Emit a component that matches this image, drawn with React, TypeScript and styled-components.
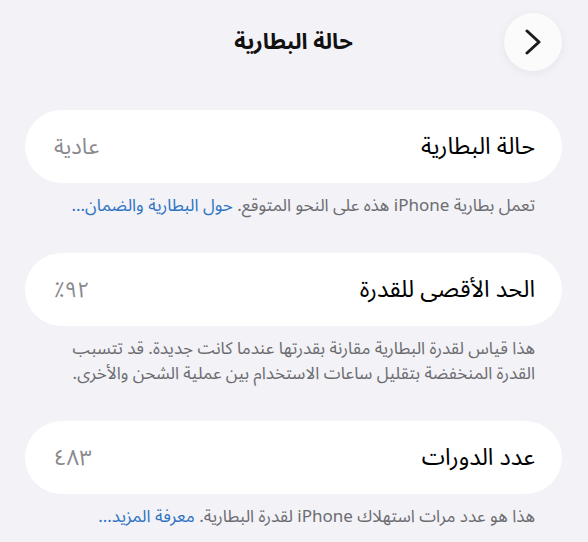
import React from 'react';
import styled, { createGlobalStyle } from 'styled-components';

const GlobalStyle = createGlobalStyle`
  html, body {
    margin: 0;
    padding: 0;
    background: #f2f2f7;
  }
  body {
    font-family: "Noto Sans Arabic", "DejaVu Sans", "Noto Sans", sans-serif;
    -webkit-font-smoothing: antialiased;
  }
`

const Page = styled.div`
  direction: rtl;
  height: 542px;
  overflow: hidden;
  padding: 0 26px 0 25px;
  box-sizing: border-box;
  display: flex;
  flex-direction: column;
`

const Header = styled.header`
  display: grid;
  grid-template-columns: 58px 1fr 58px;
  align-items: center;
  padding-top: 13px;
  height: 58px;
  margin-bottom: 39px;
`

const BackButton = styled.button`
  width: 58px;
  height: 58px;
  border-radius: 50%;
  border: none;
  background: #fbfbfc;
  box-shadow: 0 2px 10px rgba(0, 0, 0, 0.06);
  display: flex;
  align-items: center;
  justify-content: center;
  padding: 0;
`

const Title = styled.h1`
  margin: 0;
  text-align: center;
  font-size: 22px;
  font-weight: 700;
  color: #111;
`

const Section = styled.section`
  display: flex;
  flex-direction: column;
  margin-bottom: 34px;

  &:last-child {
    margin-bottom: 0;
  }
`

const Card = styled.div`
  height: 73px;
  flex-shrink: 0;
  background: #fff;
  border-radius: 37px;
  display: flex;
  align-items: center;
  justify-content: space-between;
  padding: 0 27px 0 29px;
`

const Label = styled.span`
  font-size: 23.5px;
  color: #000;
`

const Value = styled.span`
  font-size: 22px;
  color: #8a8a8e;
`

const Footer = styled.p`
  margin: 0;
  padding: 11px 27px 0 20px;
  font-size: 17px;
  line-height: 25px;
  color: #6c6c70;
  white-space: nowrap;
`

const Link = styled.a`
  color: #2f73c2;
  text-decoration: none;
`

const Chevron = () => (
  <svg width="18" height="26" viewBox="0 0 18 26">
    <polyline points="3,2 15,13 3,24" fill="none" stroke="#1c1c1e" strokeWidth="3" strokeLinecap="round" strokeLinejoin="round" />
  </svg>
)

const App = () => {
  return (
    <>
      <GlobalStyle />
      <Page dir="rtl">
        <Header>
          <BackButton aria-label="رجوع">
            <Chevron />
          </BackButton>
          <Title>حالة البطارية</Title>
          <span />
        </Header>

        <Section>
          <Card>
            <Label>حالة البطارية</Label>
            <Value>عادية</Value>
          </Card>
          <Footer>
            تعمل بطارية iPhone هذه على النحو المتوقع. <Link href="#">حول البطارية والضمان...</Link>
          </Footer>
        </Section>

        <Section>
          <Card>
            <Label>الحد الأقصى للقدرة</Label>
            <Value>٩٢٪</Value>
          </Card>
          <Footer>
            هذا قياس لقدرة البطارية مقارنة بقدرتها عندما كانت جديدة. قد تتسبب
            <br />
            القدرة المنخفضة بتقليل ساعات الاستخدام بين عملية الشحن والأخرى.
          </Footer>
        </Section>

        <Section>
          <Card>
            <Label>عدد الدورات</Label>
            <Value>٤٨٣</Value>
          </Card>
          <Footer>
            هذا هو عدد مرات استهلاك iPhone لقدرة البطارية. <Link href="#">معرفة المزيد...</Link>
          </Footer>
        </Section>
      </Page>
    </>
  )
}

export default App
